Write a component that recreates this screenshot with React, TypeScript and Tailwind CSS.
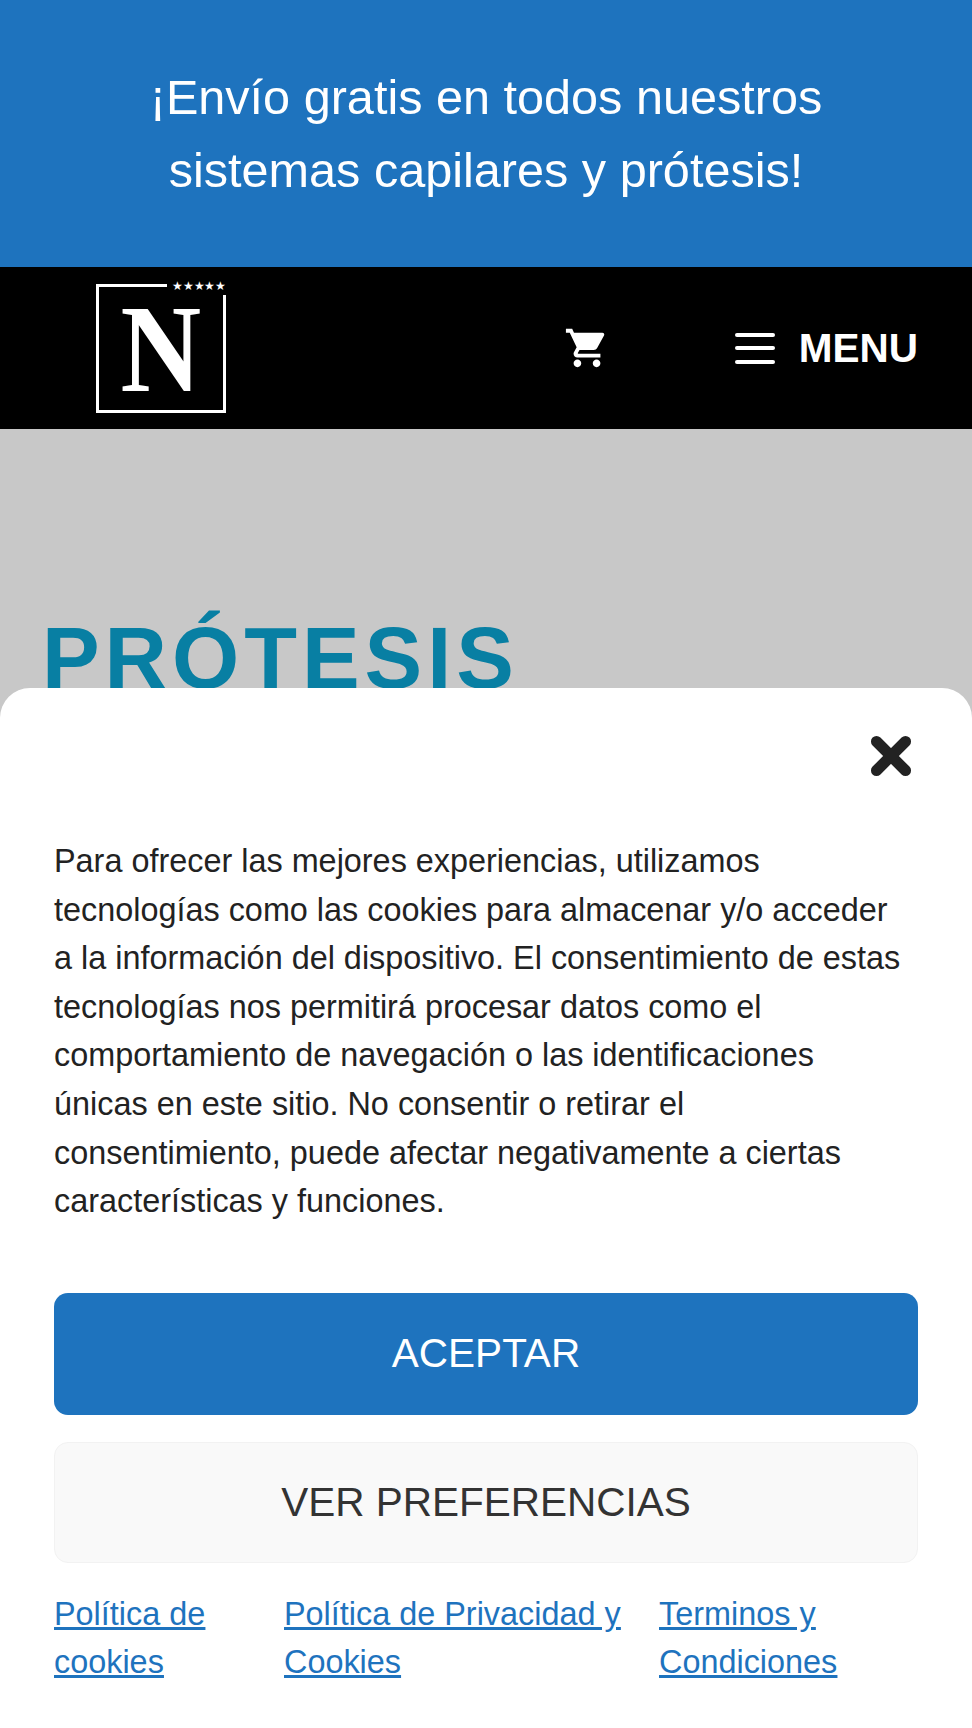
import { X } from 'lucide-react';

const sans = "font-['Liberation_Sans',Arial,sans-serif]";

function Logo() {
  return (
    <div className="relative mt-[1px] w-[130px] h-[129px] border-[3px] border-white flex items-center justify-center">
      {/* Stars cut into the top right of the frame */}
      <div className="absolute -top-[7px] -right-[3px] h-[15px] bg-black pl-[5px] text-white text-[12px] leading-[13px] tracking-[-0.2px]">
        ★★★★★
      </div>
      <span className="mt-[3px] font-['Liberation_Serif',serif] font-bold text-white text-[124px] leading-[90px] scale-x-[0.9]">N</span>
    </div>
  );
}

function CartIcon() {
  return (
    <svg viewBox="0 0 24 24" className="w-[46px] h-[46px]" fill="#fff">
      <path d="M7 18c-1.1 0-1.99.9-1.99 2S5.9 22 7 22s2-.9 2-2-.9-2-2-2zM1 2v2h2l3.6 7.59-1.35 2.45c-.16.28-.25.61-.25.96 0 1.1.9 2 2 2h12v-2H7.42c-.14 0-.25-.11-.25-.25l.03-.12.9-1.63h7.45c.75 0 1.41-.41 1.75-1.03l3.58-6.49A1 1 0 0 0 20 4H5.21l-.94-2H1zm16 16c-1.1 0-1.99.9-1.99 2s.89 2 1.99 2 2-.9 2-2-.9-2-2-2z" />
    </svg>
  );
}

export default function App() {
  return (
    <div className={`relative h-[1728px] w-[972px] overflow-hidden bg-[#c8c8c8] ${sans}`}>
      {/* Promo banner */}
      <div className="h-[267px] bg-[#1e73be] flex items-center justify-center px-[54px]">
        <p className="text-white text-[48.6px] leading-[73px] text-center">
          ¡Envío gratis en todos nuestros sistemas capilares y prótesis!
        </p>
      </div>

      {/* Header */}
      <div className="h-[162px] bg-black flex items-center pl-[96px] pr-[54px]">
        <Logo />
        <div className="ml-auto mr-[125px]">
          <CartIcon />
        </div>
        <div className="flex items-center gap-[24px]">
          <div className="flex flex-col gap-[9.5px] w-[40px]">
            <span className="h-[4px] rounded bg-white" />
            <span className="h-[4px] rounded bg-white" />
            <span className="h-[4px] rounded bg-white" />
          </div>
          <span className="text-white font-bold text-[40.5px] leading-none">MENU</span>
        </div>
      </div>

      {/* Page title */}
      <div className="pt-[186px] pl-[42px]">
        <h1 className="text-[#087fa3] font-bold text-[86.4px] leading-none tracking-[5px]">PRÓTESIS</h1>
      </div>

      {/* Cookie sheet */}
      <div className="absolute left-0 right-0 top-[688px] bottom-0 bg-white rounded-t-[30px] px-[54px]">
        <div className="flex justify-end pt-[39px]">
          <X className="w-[58px] h-[58px] text-[#222] -mr-[2px]" strokeWidth={4.6} />
        </div>
        <p className="mt-[52px] pr-[10px] text-[#222] text-[32.4px] leading-[48.6px]">
          Para ofrecer las mejores experiencias, utilizamos tecnologías como las cookies para almacenar y/o acceder a la información del dispositivo. El consentimiento de estas tecnologías nos permitirá procesar datos como el comportamiento de navegación o las identificaciones únicas en este sitio. No consentir o retirar el consentimiento, puede afectar negativamente a ciertas características y funciones.
        </p>
        <button className="mt-[67px] w-full h-[122px] rounded-[14px] bg-[#1e73be] text-white text-[40.5px]">
          ACEPTAR
        </button>
        <button className="mt-[27px] w-full h-[121px] rounded-[14px] bg-[#f9f9f9] border border-[#f2f2f2] text-[#333] text-[40.5px]">
          VER PREFERENCIAS
        </button>
        <div className="mt-[27px] flex text-[32.4px] leading-[48.6px] text-[#1e73be] underline">
          <a className="w-[230px]">Política de cookies</a>
          <a className="w-[375px]">Política de Privacidad y Cookies</a>
          <a className="w-[200px]">Terminos y Condiciones</a>
        </div>
      </div>
    </div>
  );
}
